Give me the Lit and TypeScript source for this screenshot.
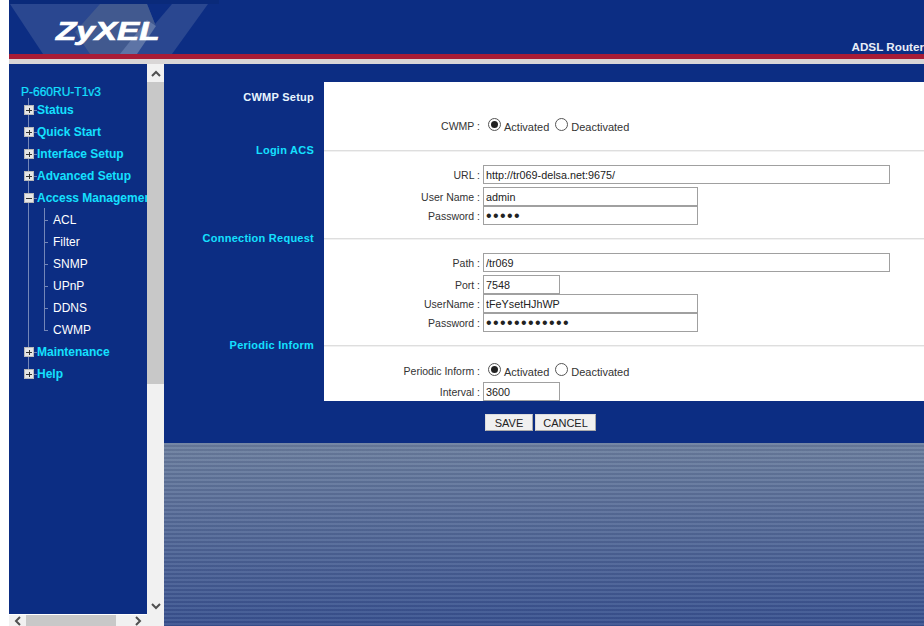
import { LitElement, html, css } from "lit";
import { customElement } from "lit/decorators.js";

const plus = (open: boolean) => html`<svg class="box" viewBox="0 0 10 10" width="10" height="10"><rect width="10" height="10" fill="#b9b9b9"/><rect x="1" y="1" width="8" height="8" fill="#e6e6e6"/><path d="M2 5.5h6${open ? "" : "M5.5 3v5"}" stroke="#333" fill="none"/></svg>`;

const tree = ["Status", "Quick Start", "Interface Setup", "Advanced Setup", "Access Management"];
const subs = ["ACL", "Filter", "SNMP", "UPnP", "DDNS", "CWMP"];

@customElement("app-root")
export class AppRoot extends LitElement {
  static styles = css`
    :host { display: block; width: 924px; height: 626px; overflow: hidden; background: #fff; font-family: "Liberation Sans", Arial, sans-serif; font-size: 12px; color: #333; }
    .page { margin-left: 9px; height: 626px; display: flex; flex-direction: column; }
    .banner { height: 64px; flex: none; background: #0c2d83; display: flex; flex-direction: column; }
    .bannerTop { height: 54px; flex: none; position: relative; display: flex; justify-content: flex-end; align-items: flex-end; box-sizing: border-box; background: #0c2d83; }
    .logoArt { position: absolute; left: 0; top: 0; }
    .logoText { position: absolute; left: 47px; top: 16px; font: italic bold 26px "Liberation Sans", Arial, sans-serif; color: #fff; -webkit-text-stroke: 0.7px #fff; transform: scaleX(1.28); transform-origin: left top; }
    .adsl { color: #e9eef8; font-weight: bold; font-size: 11.7px; line-height: 14px; white-space: nowrap; }
    .red { height: 5px; background: #a81c36; }
    .grey { height: 5px; background: #d9d6d6; }
    .body { flex: 1; display: flex; min-height: 0; }
    .left { width: 155px; flex: none; display: grid; grid-template-columns: 138px 17px; grid-template-rows: 550px 1px 11px; }
    .nav { background: #0c2d83; overflow: hidden; padding: 21px 0 0 12px; box-sizing: border-box; white-space: nowrap; position: relative; }
    .model { color: #14e0ff; font-size: 12px; line-height: 14px; -webkit-text-stroke: 0.2px #14e0ff; }
    .tree { position: relative; padding-left: 2px; }
    .tree::before { content: ""; position: absolute; left: 7px; top: -1px; height: 276px; width: 1px; background: #7386b8; }
    .item { height: 22px; display: flex; align-items: center; color: #14e0ff; font-weight: bold; position: relative; }
    .item .box { flex: none; position: relative; margin-left: 1px; }
    .dash { width: 3px; height: 1px; background: #7386b8; flex: none; }
    .subs { position: relative; padding-left: 30px; }
    .subs::before { content: ""; position: absolute; left: 21px; top: -1px; height: 122px; width: 1px; background: #7386b8; }
    .sub { height: 22px; display: flex; align-items: center; color: #fff; position: relative; }
    .sub::before { content: ""; position: absolute; left: -9px; top: 11px; width: 4px; height: 1px; background: #7386b8; }
    .vbar { background: #f1f1f1; grid-row: 1 / 3; display: flex; flex-direction: column; align-items: stretch; }
    .vend { height: 18px; flex: none; display: flex; align-items: center; justify-content: center; }
    .vthumb { background: #c8c8c8; height: 302px; flex: none; }
    .vgap { flex: 1; }
    .hgap { background: #fff; grid-column: 1; grid-row: 2; }
    .hbar { grid-column: 1; grid-row: 3; background: #f1f1f1; display: flex; align-items: center; height: 11px; }
    .hend { width: 17px; flex: none; display: flex; justify-content: center; }
    .hthumb { width: 90px; height: 11px; background: #c8c8c8; flex: none; }
    .hspace { flex: 1; }
    .corner { background: #f1f1f1; grid-column: 2; grid-row: 3; }
    .main { flex: 1; display: flex; flex-direction: column; min-width: 0; }
    .blue { height: 379px; flex: none; background: #0c2d83; padding-top: 18px; box-sizing: border-box; }
    .sec { display: grid; grid-template-columns: 160px 600px; }
    .sl { color: #14e0ff; font-weight: bold; font-size: 11px; text-align: right; padding-right: 10px; letter-spacing: 0.25px; line-height: 14px; }
    .sl.first { color: #e8f6ff; padding-top: 8px; }
    .sl.over { margin-top: -7px; }
    .sr { background: #fff; }
    .sr.s1 { height: 68px; display: flex; flex-direction: column; justify-content: flex-end; }
    .sr.s1 .row { margin-bottom: 15px; }
    .sr.s2 { height: 88px; }
    .sr.s3 { height: 107px; }
    .sr.s4 { height: 56px; }
    .rule { height: 1px; background: #dedede; box-shadow: 0 1px #f1f1f1; }
    .g14 { height: 14px; } .g15 { height: 15px; } .g3 { height: 3px; } .g2 { height: 2px; }
    .row { display: flex; align-items: center; height: 19px; }
    .lbl { width: 159px; flex: none; text-align: right; padding-right: 3px; box-sizing: border-box; font-size: 10.5px; white-space: nowrap; }
    input { box-sizing: border-box; height: 19px; border: 1px solid #a0a0a0; padding: 0 2px; margin: 0; font: 10.8px "Liberation Sans", Arial, sans-serif; color: #222; background: #fff; outline: none; }
    input[type="password"] { font-size: 16px; letter-spacing: 1.4px; }
    .w1 { width: 407px; } .w2 { width: 215px; } .w3 { width: 77px; }
    .radios { display: flex; align-items: center; padding-left: 5px; font-size: 11px; }
    .rad { width: 13px; height: 13px; border: 1px solid #555; border-radius: 50%; box-sizing: border-box; display: flex; align-items: center; justify-content: center; margin-top: -3px; flex: none; }
    .rad i { width: 7px; height: 7px; border-radius: 50%; background: #222; }
    .radios span { margin: 2px 6px 0 3px; }
    .btns { display: flex; gap: 2px; padding: 13px 0 0 321px; }
    button { height: 17px; box-sizing: border-box; border: 1px solid #dcdcdc; border-right-color: #aaa; border-bottom-color: #aaa; background: #f0f0f0; font: 11px "Liberation Sans", Arial, sans-serif; color: #222; padding: 0; }
    .save { width: 48px; } .cancel { width: 61px; }
    .stripes { flex: 1; background: repeating-linear-gradient(to bottom, rgba(255,255,255,.06) 0 2px, rgba(0,0,40,.08) 2px 4px), linear-gradient(to bottom, #6d809f 0%, #3a5391 100%); }
  `;

  private radio() {
    return html`<div class="radios"><div class="rad"><i></i></div><span>Activated</span><div class="rad"></div><span>Deactivated</span></div>`;
  }

  private row(label: string, cls: string, value: string, type = "text") {
    return html`<div class="row"><div class="lbl">${label} :</div><input class=${cls} type=${type} .value=${value} /></div>`;
  }

  render() {
    return html`<div class="page">
      <div class="banner">
        <div class="bannerTop">
          <svg class="logoArt" width="210" height="54" viewBox="0 0 210 54">
            <rect width="210" height="4" fill="#0a2a7a"/>
            <path d="M1 4H199L163 54H34Z" fill="#2a4790"/>
            <path d="M138 4H163L146 24Z" fill="#0c2d83"/>
            <path d="M91 4H138L146 24 126 54H81L66 32Z" fill="#41598f"/>
            <path d="M147 26L128 54H111L138 20Z" fill="#5d74a6"/>
          </svg>
          <div class="logoText">ZyXEL</div>
          <div class="adsl">ADSL Router</div>
        </div>
        <div class="red"></div>
        <div class="grey"></div>
      </div>
      <div class="body">
        <div class="left">
          <nav class="nav">
            <div class="model">P-660RU-T1v3</div>
            <div class="tree">
              ${tree.map((t, i) => html`<div class="item">${plus(i === 4)}<span class="dash"></span>${t}</div>`)}
              <div class="subs">${subs.map((s) => html`<div class="sub">${s}</div>`)}</div>
              ${["Maintenance", "Help"].map((t) => html`<div class="item">${plus(false)}<span class="dash"></span>${t}</div>`)}
            </div>
          </nav>
          <div class="vbar">
            <div class="vend"><svg width="10" height="7" viewBox="0 0 10 7"><path d="M1 6l4-4 4 4" fill="none" stroke="#505050" stroke-width="2"/></svg></div>
            <div class="vthumb"></div>
            <div class="vgap"></div>
            <div class="vend"><svg width="10" height="7" viewBox="0 0 10 7"><path d="M1 1l4 4 4-4" fill="none" stroke="#505050" stroke-width="2"/></svg></div>
          </div>
          <div class="hgap"></div>
          <div class="hbar">
            <div class="hend"><svg width="7" height="10" viewBox="0 0 7 10"><path d="M6 1L2 5l4 4" fill="none" stroke="#505050" stroke-width="2"/></svg></div>
            <div class="hthumb"></div>
            <div class="hspace"></div>
            <div class="hend"><svg width="7" height="10" viewBox="0 0 7 10"><path d="M1 1l4 4-4 4" fill="none" stroke="#505050" stroke-width="2"/></svg></div>
          </div>
          <div class="corner"></div>
        </div>
        <div class="main">
          <div class="blue">
            <div class="sec">
              <div class="sl first">CWMP Setup</div>
              <div class="sr s1">
                <div class="row"><div class="lbl">CWMP :</div>${this.radio()}</div>
              </div>
            </div>
            <div class="sec">
              <div class="sl over">Login ACS</div>
              <div class="sr s2">
                <div class="rule"></div>
                <div class="g14"></div>
                ${this.row("URL", "w1", "http://tr069-delsa.net:9675/")}
                <div class="g3"></div>
                ${this.row("User Name", "w2", "admin")}
                ${this.row("Password", "w2", "admin", "password")}
              </div>
            </div>
            <div class="sec">
              <div class="sl over">Connection Request</div>
              <div class="sr s3">
                <div class="rule"></div>
                <div class="g14"></div>
                ${this.row("Path", "w1", "/tr069")}
                <div class="g3"></div>
                ${this.row("Port", "w3", "7548")}
                ${this.row("UserName", "w2", "tFeYsetHJhWP")}
                ${this.row("Password", "w2", "abcdefghijkl", "password")}
              </div>
            </div>
            <div class="sec">
              <div class="sl over">Periodic Inform</div>
              <div class="sr s4">
                <div class="rule"></div>
                <div class="g15"></div>
                <div class="row"><div class="lbl">Periodic Inform :</div>${this.radio()}</div>
                <div class="g2"></div>
                ${this.row("Interval", "w3", "3600")}
              </div>
            </div>
            <div class="btns"><button class="save">SAVE</button><button class="cancel">CANCEL</button></div>
          </div>
          <div class="stripes"></div>
        </div>
      </div>
    </div>`;
  }
}
